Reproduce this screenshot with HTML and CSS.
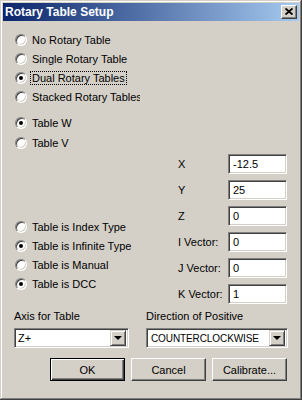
FILE: index.html
```html
<!DOCTYPE html>
<html lang="en">
<head>
<meta charset="UTF-8">
<title>Rotary Table Setup</title>
<link rel="stylesheet" href="styles.css">
</head>
<body>

<div class="window">
    <div class="titlebar">
        <span class="title">Rotary Table Setup</span>
        <span class="close">
            <svg width="8" height="7" viewBox="0 0 8 7"><path d="M0.5 0.5L7.5 6.5M7.5 0.5L0.5 6.5" stroke="#000" stroke-width="1.8"/></svg>
        </span>
    </div>

    <div class="main">
        <!-- coluna das opcoes -->
        <div class="left">
            <div class="group">
                <div class="opt"><span class="radio"></span>No Rotary Table</div>
                <div class="opt"><span class="radio"></span>Single Rotary Table</div>
                <div class="opt"><span class="radio on"></span><span class="focus">Dual Rotary Tables</span></div>
                <div class="opt"><span class="radio"></span><span class="clip">Stacked Rotary Tables</span></div>
            </div>
            <div class="group tables">
                <div class="opt"><span class="radio on"></span>Table W</div>
                <div class="opt"><span class="radio"></span>Table V</div>
            </div>
            <div class="group types">
                <div class="opt"><span class="radio"></span>Table is Index Type</div>
                <div class="opt"><span class="radio on"></span>Table is Infinite Type</div>
                <div class="opt"><span class="radio"></span>Table is Manual</div>
                <div class="opt"><span class="radio on"></span>Table is DCC</div>
            </div>
        </div>

        <!-- coluna dos valores -->
        <div class="right">
            <div class="row"><span class="lbl">X</span><div class="field">-12.5</div></div>
            <div class="row"><span class="lbl">Y</span><div class="field">25</div></div>
            <div class="row"><span class="lbl">Z</span><div class="field">0</div></div>
            <div class="row"><span class="lbl">I Vector:</span><div class="field">0</div></div>
            <div class="row"><span class="lbl">J Vector:</span><div class="field">0</div></div>
            <div class="row"><span class="lbl">K Vector:</span><div class="field">1</div></div>
        </div>
    </div>

    <div class="selects">
        <div class="sel-col axis">
            <div class="sel-label">Axis for Table</div>
            <div class="combo"><span class="combo-text">Z+</span><span class="arrow"></span></div>
        </div>
        <div class="sel-col direction">
            <div class="sel-label">Direction of Positive</div>
            <div class="combo"><span class="combo-text caps">COUNTERCLOCKWISE</span><span class="arrow"></span></div>
        </div>
    </div>

    <div class="buttons">
        <div class="btn default"><span>OK</span></div>
        <div class="btn"><span>Cancel</span></div>
        <div class="btn"><span>Calibrate...</span></div>
    </div>
</div>

</body>
</html>
```

FILE: styles.css
```css
body {
    margin: 0;
    padding: 0;
    font-family: "Liberation Sans", Arial, sans-serif;
    font-size: 11px;
    color: #000;
}

.window {
    width: 302px;
    height: 400px;
    box-sizing: border-box;
    padding: 3px;
    background: #d4d0c8;
    box-shadow: inset -1px -1px #404040, inset 1px 1px #d4d0c8,
                inset -2px -2px #808080, inset 2px 2px #fff;
    display: flex;
    flex-direction: column;
}

/* Barra de titulo */
.titlebar {
    height: 18px;
    flex: none;
    display: flex;
    align-items: center;
    justify-content: space-between;
    background: linear-gradient(to right, #0a246a, #a6caf0);
    padding: 0 2px 0 2px;
}

.title {
    color: #fff;
    font-weight: bold;
    font-size: 12px;
}

.close {
    width: 16px;
    height: 14px;
    box-sizing: border-box;
    background: #d4d0c8;
    border: 1px solid;
    border-color: #fff #404040 #404040 #fff;
    box-shadow: inset -1px -1px #808080;
    display: flex;
    align-items: center;
    justify-content: center;
}

.close svg {
    display: block;
    margin-top: -1px;
}

/* Area principal */
.main {
    height: 288px;
    flex: none;
    display: flex;
}

.left {
    margin-left: 12px;
    width: 163px;
    padding-top: 9px;
}

.opt {
    height: 19px;
    display: flex;
    align-items: center;
    gap: 5px;
    white-space: nowrap;
}

.tables {
    margin-top: 7px;
}

.tables .opt {
    height: 20px;
}

.types {
    margin-top: 64px;
}

.radio {
    width: 12px;
    height: 12px;
    flex: none;
    box-sizing: border-box;
    border-radius: 50%;
    border: 1px solid;
    border-color: #808080 #fff #fff #808080;
    box-shadow: inset 1px 1px #404040, inset -1px -1px #d4d0c8;
    background: #fff;
    position: relative;
}

.radio.on::after {
    content: '';
    position: absolute;
    left: 3px;
    top: 3px;
    width: 4px;
    height: 4px;
    border-radius: 50%;
    background: #000;
}

.focus {
    outline: 1px dotted #000;
    outline-offset: 0;
    padding: 0 1px;
    margin-left: -1px;
}

.clip {
    display: inline-block;
    width: 108px;
    overflow: hidden;
}

.right {
    padding-top: 133px;
    display: flex;
    flex-direction: column;
    gap: 6px;
}

.row {
    display: flex;
    align-items: center;
    height: 20px;
}

.lbl {
    width: 50px;
}

.field {
    width: 59px;
    height: 20px;
    box-sizing: border-box;
    border: 1px solid;
    border-color: #808080 #fff #fff #808080;
    box-shadow: inset 1px 1px #404040, inset -1px -1px #d4d0c8;
    background: #fff;
    padding-left: 4px;
    line-height: 18px;
}

/* Listas de selecao */
.selects {
    display: flex;
    gap: 17px;
    padding-left: 11px;
}

.sel-label {
    height: 14px;
    line-height: 14px;
    margin-bottom: 5px;
}

.axis .combo {
    width: 115px;
}

.direction .combo {
    width: 142px;
}

.combo {
    height: 20px;
    box-sizing: border-box;
    border: 1px solid;
    border-color: #808080 #fff #fff #808080;
    box-shadow: inset 1px 1px #404040, inset -1px -1px #d4d0c8;
    background: #fff;
    padding: 2px;
    display: flex;
    align-items: center;
    justify-content: space-between;
}

.combo-text {
    padding-left: 1px;
}

.combo-text.caps {
    font-size: 10px;
    letter-spacing: -0.1px;
    padding-left: 2px;
}

.arrow {
    width: 16px;
    height: 16px;
    flex: none;
    box-sizing: border-box;
    background: #d4d0c8;
    border: 1px solid;
    border-color: #d4d0c8 #404040 #404040 #d4d0c8;
    box-shadow: inset 1px 1px #fff, inset -1px -1px #808080;
    position: relative;
}

.arrow::after {
    content: '';
    position: absolute;
    left: 3px;
    top: 5px;
    border-left: 4px solid transparent;
    border-right: 4px solid transparent;
    border-top: 4px solid #000;
}

/* Botoes */
.buttons {
    display: flex;
    justify-content: flex-end;
    gap: 6px;
    padding-right: 12px;
    margin-top: 10px;
}

.btn {
    width: 75px;
    height: 23px;
    box-sizing: border-box;
    border: 1px solid;
    border-color: #fff #404040 #404040 #fff;
    box-shadow: inset -1px -1px #808080;
    display: flex;
    align-items: center;
    justify-content: center;
}

.btn.default {
    border: 1px solid #000;
    box-shadow: inset 1px 1px #fff, inset -1px -1px #404040, inset -2px -2px #808080;
}
```
